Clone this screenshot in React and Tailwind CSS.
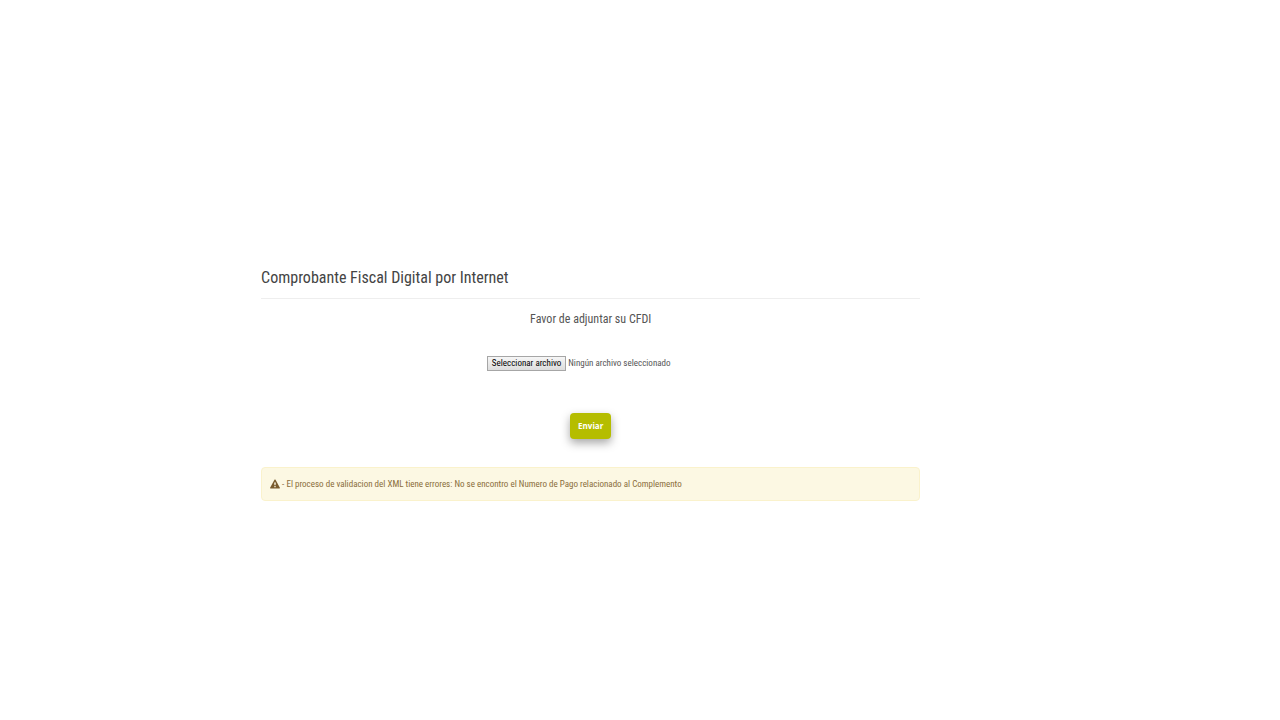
import React, { useRef, useState } from "react";

const WarningIcon = () => (
  <svg viewBox="0 0 20 18" className="h-[10px] w-[10px] shrink-0" aria-hidden="true">
    <path
      fill="#7a5c2e"
      fillRule="evenodd"
      d="M10 0c.5 0 .9.2 1.1.7l8.7 15.6c.5.9 0 1.700-1 1.700H1.200c-1 0-1.500-.8-1-1.700L8.900.7C9.100.2 9.500 0 10 0zM8.300 6l.6 5.500h2.200l.6-5.500H8.300zM8.700 13v2.300h2.600V13H8.700z"
    />
  </svg>
);

const App = () => {
  const fileInput = useRef(null);
  const [fileName, setFileName] = useState("");

  const handleChange = (e) => {
    setFileName(e.target.files[0]?.name || "");
  };

  return (
    <main className="ml-[20.4%] w-[51.5%] pt-[266px] font-['Roboto_Condensed','Roboto',sans-serif] text-[#555555]">
      <h1 className="border-b border-[#eeeeee] pb-2 text-[16px] leading-6 text-[#444444]">
        Comprobante Fiscal Digital por Internet
      </h1>

      <form className="flex flex-col items-center" onSubmit={(e) => e.preventDefault()}>
        <label htmlFor="cfdi" className="mt-2 text-[12px] leading-6">
          Favor de adjuntar su CFDI
        </label>

        <div className="mt-6 mr-6 flex items-center gap-0.5 text-[9px] leading-4">
          <input
            id="cfdi"
            ref={fileInput}
            type="file"
            className="hidden"
            onChange={handleChange}
          />
          <button
            type="button"
            className="h-[15px] border border-[#a6a6a6] bg-linear-to-b from-[#f6f6f6] to-[#dddddd] px-1 leading-3 text-black"
            onClick={() => fileInput.current.click()}
          >
            Seleccionar archivo
          </button>
          <span>{fileName || "Ningún archivo seleccionado"}</span>
        </div>

        <button
          type="submit"
          className="mt-[42px] h-[26px] rounded-[4px] bg-[#b5bd00] px-2 font-['Open_Sans',sans-serif] text-[8px] font-bold text-white shadow-[0_4px_10px_rgba(0,0,0,0.35)]"
        >
          Enviar
        </button>
      </form>

      <div
        role="alert"
        className="mt-7 flex items-center gap-0.5 rounded-[4px] border border-[#faf2cc] bg-[#fcf8e3] px-2 py-2 text-[9px] leading-4 text-[#8a6d3b]"
      >
        <WarningIcon />
        <span>
          - El proceso de validacion del XML tiene errores: No se encontro el Numero de Pago relacionado al Complemento
        </span>
      </div>
    </main>
  );
};

export default App;
